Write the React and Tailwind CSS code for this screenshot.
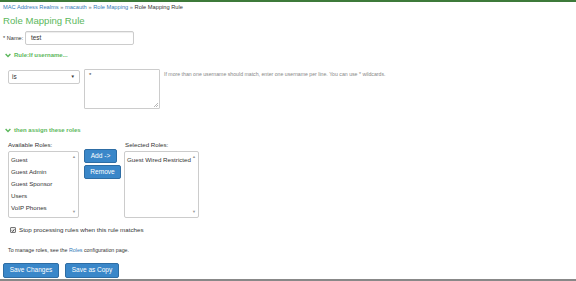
import React from "react";

const roles = ["Guest", "Guest Admin", "Guest Sponsor", "Users", "VoIP Phones"];

const Chevron = () => (
    <svg width="6" height="5" viewBox="0 0 10 8" className="mr-[3px]">
        <path d="M1 1.5 L5 5.5 L9 1.5" stroke="#5cb85c" strokeWidth="2.4" fill="none" />
    </svg>
);

const ScrollArrows = () => (
    <div className="absolute right-[2px] top-[3px] bottom-[3px] flex flex-col justify-between text-[#999] text-[4px] leading-[4px]">
        <span>▲</span>
        <span>▼</span>
    </div>
);

const App = () => {
    return (
        <div className="w-[576px] h-[281px] bg-white font-['Liberation_Sans',Arial,sans-serif] text-[#333] overflow-hidden flex flex-col">
            <div className="h-[2px] bg-[#3d7a3a]" />

            {/* Breadcrumb */}
            <div className="h-[10px] pl-[3px] text-[5.7px] leading-[10px] whitespace-nowrap">
                <span className="text-[#337ab7]">MAC Address Realms</span>
                <span className="text-[#777]"> » </span>
                <span className="text-[#337ab7]">macauth</span>
                <span className="text-[#777]"> » </span>
                <span className="text-[#337ab7]">Role Mapping</span>
                <span className="text-[#777]"> » </span>
                <span className="text-[#333]">Role Mapping Rule</span>
            </div>

            <h1 className="mt-[2px] h-[14px] pl-[3px] text-[9.6px] leading-[14px] text-[#5cb85c]">
                Role Mapping Rule
            </h1>

            {/* Name */}
            <div className="mt-[3px] h-[14px] flex items-center pl-[3px] whitespace-nowrap">
                <span className="w-[22px] shrink-0 text-[5.6px]">* Name:</span>
                <div className="w-[109px] h-[14px] border border-[#ccc] rounded-[2px] flex items-center pl-[5px] text-[6.4px] text-[#333] shadow-[inset_0_1px_1px_rgba(0,0,0,0.075)]">
                    test
                </div>
            </div>

            <div className="mt-[5px] h-[10px] pl-[5px] flex items-center text-[6px] font-bold text-[#5cb85c]">
                <Chevron />
                Rule:If username...
            </div>

            {/* Rule */}
            <div className="mt-[9px] flex pl-[8px]">
                <div className="mt-[1px] w-[72px] h-[14px] border border-[#ccc] rounded-[2px] flex items-center justify-between pl-[3px] pr-[4px] text-[6.4px]">
                    <span>is</span>
                    <span className="text-[4.5px] text-[#333]">▼</span>
                </div>
                <div className="ml-[4px] w-[76px] h-[40px] border border-[#ccc] rounded-[1px] relative pl-[4px] pt-[1px] text-[6px] leading-[8px]">
                    *
                    <svg width="5" height="5" viewBox="0 0 5 5" className="absolute right-[1px] bottom-[1px]">
                        <path d="M1 5 L5 1 M3 5 L5 3" stroke="#999" strokeWidth="0.7" />
                    </svg>
                </div>
                <p className="ml-[4px] mt-[1px] text-[5.2px] leading-[8px] text-[#888]">
                    If more than one username should match, enter one username per line. You can use * wildcards.
                </p>
            </div>

            <div className="mt-[16px] h-[10px] pl-[5px] flex items-center text-[6px] font-bold text-[#5cb85c]">
                <Chevron />
                then assign these roles
            </div>

            {/* Roles */}
            <div className="mt-[5px] flex pl-[8px] text-[6.2px]">
                <div className="flex flex-col">
                    <span className="h-[10px] leading-[10px]">Available Roles:</span>
                    <div className="mt-[1px] w-[71px] h-[67px] border border-[#ccc] rounded-[2px] relative pt-[2px] pl-[2px]">
                        {roles.map((r) => (
                            <div key={r} className="h-[12px] leading-[12px]">{r}</div>
                        ))}
                        <ScrollArrows />
                    </div>
                </div>
                <div className="ml-[5px] w-[40px] pt-[9px] flex flex-col items-start gap-[2px]">
                    <button className="h-[14px] w-[33px] bg-[#3a87c9] border border-[#2e6da4] rounded-[2px] text-white text-[6.6px] leading-none">
                        Add -&gt;
                    </button>
                    <button className="h-[14px] w-[37px] bg-[#3a87c9] border border-[#2e6da4] rounded-[2px] text-white text-[6.6px] leading-none">
                        Remove
                    </button>
                </div>
                <div className="flex flex-col">
                    <span className="h-[10px] leading-[10px] pl-[1px]">Selected Roles:</span>
                    <div className="mt-[1px] w-[75px] h-[67px] border border-[#ccc] rounded-[2px] relative pt-[2px] pl-[2px]">
                        <div className="h-[12px] leading-[12px]">Guest Wired Restricted</div>
                        <ScrollArrows />
                    </div>
                </div>
            </div>

            {/* Stop processing */}
            <div className="mt-[7px] h-[10px] pl-[10px] flex items-center text-[6.2px]">
                <span className="w-[6px] h-[6px] border border-[#777] rounded-[1px] bg-[#eee] flex items-center justify-center mr-[3px]">
                    <svg width="5" height="5" viewBox="0 0 10 10">
                        <path d="M2 5 L4.2 7.5 L8.5 2" stroke="#222" strokeWidth="2" fill="none" />
                    </svg>
                </span>
                Stop processing rules when this rule matches
            </div>

            <p className="mt-[10px] h-[10px] leading-[10px] pl-[8px] text-[5.3px]">
                To manage roles, see the <span className="text-[#337ab7]">Roles</span> configuration page.
            </p>

            {/* Actions */}
            <div className="mt-[8px] flex gap-[6px] pl-[3px]">
                <button className="h-[15px] w-[56px] bg-[#3a87c9] border border-[#2e6da4] rounded-[2px] text-white text-[6.5px] leading-none">
                    Save Changes
                </button>
                <button className="h-[15px] w-[54px] bg-[#3a87c9] border border-[#2e6da4] rounded-[2px] text-white text-[6.5px] leading-none">
                    Save as Copy
                </button>
            </div>

            <div className="mt-auto h-[2px] bg-[#888]" />
        </div>
    );
};

export default App;
